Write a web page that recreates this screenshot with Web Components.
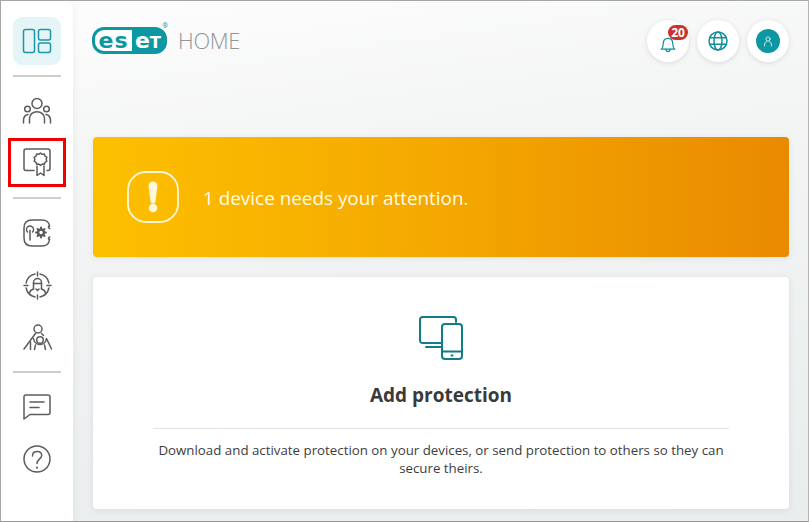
<!DOCTYPE html>
<html>
<head>
<meta charset="utf-8">
<title>ESET HOME</title>
<style>
html, body { margin: 0; height: 100%; }
body { font-family: "Open Sans", "Liberation Sans", sans-serif; color: #3a3a3a; overflow: hidden; }
</style>
</head>
<body>
<home-app>
  <side-nav slot="nav"></side-nav>
  <top-bar slot="top"></top-bar>
  <alert-banner slot="main">1 device needs your attention.</alert-banner>
  <add-card slot="main" heading="Add protection">Download and activate protection on your devices, or send protection to others so they can secure theirs.</add-card>
</home-app>

<script>
class HomeApp extends HTMLElement {
  constructor() {
    super();
    this.attachShadow({ mode: 'open' }).innerHTML = `
      <style>
        :host { display: flex; box-sizing: border-box; width: 809px; height: 522px; border: 1px solid #a6a6a6; border-right-color: #b4b4b4; border-bottom-color: #9a9a9a;
          background: linear-gradient(172deg, #fdfdfd 0%, #f4f5f5 30%, #e9edee 100%); position: relative; overflow: hidden; }
        .content { flex: 1; min-width: 0; display: flex; flex-direction: column; padding: 0 19px 0 20px; }
        .stack { display: flex; flex-direction: column; gap: 20px; }
      </style>
      <slot name="nav"></slot>
      <div class="content">
        <slot name="top"></slot>
        <div class="stack"><slot name="main"></slot></div>
      </div>`;
  }
}

const line = 'fill="none" stroke="currentColor" stroke-width="1.5" stroke-linecap="round" stroke-linejoin="round"';

class SideNav extends HTMLElement {
  constructor() {
    super();
    this.attachShadow({ mode: 'open' }).innerHTML = `
      <style>
        :host { display: flex; flex-direction: column; align-items: center; width: 72px; flex: none; background: #fff; color: #5c5c5c; padding-top: 16px; box-sizing: border-box; border-radius: 0 8px 0 0; position: relative; box-shadow: 2px 0 6px rgba(120,130,130,.08); }
        .tile { width: 48px; height: 48px; border-radius: 9px; background: #e5f4f6; color: #1d97a3; display: flex; align-items: center; justify-content: center; }
        hr { width: 48px; height: 2px; margin: 0; border: 0; background: #cfcfcf; flex: none; }
        .i { width: 48px; display: flex; align-items: center; justify-content: center; flex: none; }
        svg { display: block; }
        .mark { position: absolute; left: 7px; top: 137px; width: 58px; height: 49px; border: 3px solid #f00000; box-sizing: border-box; }
      </style>
      <div class="tile">
        <svg width="30" height="26" viewBox="0 0 30 26" ${line} stroke-width="1.7">
          <rect x="1.5" y="1.5" width="11" height="23" rx="2"/>
          <rect x="16.5" y="1.5" width="12" height="10.5" rx="2"/>
          <rect x="16.5" y="15" width="12" height="9.5" rx="2"/>
        </svg>
      </div>
      <hr style="margin-top:10px">
      <div class="i" style="height:30px;margin-top:19px">
        <svg width="30" height="28" viewBox="0 0 30 28" ${line}>
          <circle cx="15" cy="6.5" r="5"/>
          <circle cx="5.5" cy="12" r="2.8"/>
          <circle cx="24.5" cy="12" r="2.8"/>
          <path d="M7.5 26v-4.5c0-4 3.3-6.8 7.5-6.8s7.5 2.8 7.5 6.8V26"/>
          <path d="M1.5 26v-2.5c0-3 1.5-5.5 4.5-6"/>
          <path d="M28.5 26v-2.5c0-3-1.5-5.5-4.5-6"/>
        </svg>
      </div>
      <div class="i" style="height:30px;margin-top:21px">
        <svg width="28" height="29" viewBox="0 0 28 29" ${line}>
          <path d="M11 22.5H3a2 2 0 0 1-2-2V3a2 2 0 0 1 2-2h22a2 2 0 0 1 2 2v17.5a2 2 0 0 1-2 2h-1"/>
          <path d="M17.5 5l1.7 1.3 2.1-.2.7 2 1.8 1.1-.6 2 .6 2-1.8 1.1-.7 2-2.1-.2-1.7 1.3-1.7-1.3-2.1.2-.7-2-1.8-1.1.6-2-.6-2 1.8-1.1.7-2 2.1.2z"/>
          <path d="M14 18v9.5l3.5-2.5 3.5 2.5V18"/>
        </svg>
      </div>
      <hr style="margin-top:20px">
      <div class="i" style="height:30px;margin-top:19px">
        <svg width="29" height="28" viewBox="0 0 29 28" ${line}>
          <path d="M26.5 7C26 3 23 1 19 1H9C4 1 1 3.5 1 9v10c0 5 3 8 8 8h10c4 0 7-2 7.5-6.5"/>
          <path d="M26.5 7c-1.500.5-1.500 2 .3 2.500M26.500 20.500c-1.500-.5-1.500-2 .3-2.500"/>
          <path d="M7 21v-9.500"/>
          <path d="M4.500 13a3.500 3.500 0 1 1 5 0"/>
          <circle cx="18" cy="13.500" r="3" stroke-width="2.500"/>
          <path d="M18 8.500v1.500M18 17v1.500M13 13.500h1.500M21.500 13.500H23M14.500 10l1 1M20.500 16l1 1M21.500 10l-1 1M15.500 16l-1 1" stroke-width="2"/>
        </svg>
      </div>
      <div class="i" style="height:30px;margin-top:22px">
        <svg width="29" height="29" viewBox="0 0 29 29" ${line}>
          <path d="M12 3.1A11.500 11.500 0 0 0 3.100 12M17 3.100A11.500 11.500 0 0 1 25.900 12M3.100 17A11.500 11.500 0 0 0 12 25.900M17 25.900A11.500 11.500 0 0 0 25.900 17"/>
          <path d="M14.500 1v4M14.500 24v4M1 14.500h4M24 14.500h4"/>
          <path d="M10.500 18v-6.500a4 4 0 0 1 8 0V18"/>
          <path d="M10.500 12.500h8"/>
          <path d="M6.500 22c.5-2.500 2-3.500 4-4M22.500 22c-.5-2.500-2-3.500-4-4"/>
          <path d="M13 18l1.500 1.500L16 18"/>
        </svg>
      </div>
      <div class="i" style="height:30px;margin-top:23px">
        <svg width="29" height="29" viewBox="0 0 29 29" ${line}>
          <circle cx="15" cy="5" r="4"/>
          <circle cx="17" cy="16" r="3.300"/>
          <path d="M12.500 9.500L1 25"/>
          <path d="M18.500 9.500l2 2"/>
          <path d="M7.500 18v7.500M12.500 21l-1 4.500M21.500 21l1 4.500"/>
          <path d="M10.500 14.500c.5 3.500 3 6 6.500 6s6-2.500 6.500-6l5 10.500"/>
        </svg>
      </div>
      <hr style="margin-top:18px">
      <div class="i" style="height:30px;margin-top:19px">
        <svg width="28" height="26" viewBox="0 0 28 26" ${line}>
          <path d="M1 3a2 2 0 0 1 2-2h22a2 2 0 0 1 2 2v15.500a2 2 0 0 1-2 2H7l-6 4.500z"/>
          <path d="M7 8h14M7 13.500h9"/>
        </svg>
      </div>
      <div class="i" style="height:30px;margin-top:22px">
        <svg width="28" height="28" viewBox="0 0 28 28" ${line}>
          <circle cx="14" cy="14" r="13"/>
          <path d="M9.500 11c0-2.800 2-4.500 4.700-4.500s4.500 1.700 4.500 4c0 3.500-4.700 3.500-4.700 8"/>
          <path d="M14 22.500v.2" stroke-width="2"/>
        </svg>
      </div>
      <div class="mark"></div>`;
  }
}

class TopBar extends HTMLElement {
  constructor() {
    super();
    this.attachShadow({ mode: 'open' }).innerHTML = `
      <style>
        :host { display: flex; align-items: flex-start; justify-content: space-between; height: 136px; flex: none; padding-top: 19px; box-sizing: border-box; }
        .brand { display: flex; align-items: center; gap: 11px; height: 42px; margin-top: 1px; }
        .logo { position: relative; display: flex; height: 27px; width: 75px; border: 3px solid #0d97a2; border-radius: 12px; box-sizing: border-box; background: #0d97a2; font: 700 22px/21px "DejaVu Sans", sans-serif; margin: -3px 0 0 -1px; }
        .l, .r { display: block; text-align: center; height: 21px; white-space: nowrap; }
        .l { width: 37px; background: #fff; color: #0d97a2; border-radius: 9px 0 0 9px; letter-spacing: 1px; }
        .r { width: 32px; color: #fff; }
        .r b { font-size: 16.5px; font-weight: 700; }
        .reg { position: absolute; right: -4px; top: -8px; font: 400 7px/8px "Open Sans", sans-serif; color: #0d97a2; }
        .home { font: 300 21.8px/24px "Open Sans", sans-serif; color: #8f9599; letter-spacing: -.3px; margin-top: -2px; }
        .btns { display: flex; gap: 8px; }
        .b { width: 42px; height: 42px; border-radius: 50%; background: #fff; display: flex; align-items: center; justify-content: center; color: #0f8f9a; position: relative; box-shadow: 0 1px 5px rgba(90,100,100,.18); }
        .badge { position: absolute; left: 21px; top: 5px; width: 20px; height: 15px; border-radius: 8px; background: #c9322d; color: #fff; font: 700 12px/15px "Open Sans", sans-serif; text-align: center; }
        .user { width: 24px; height: 24px; border-radius: 50%; background: #0d97a2; color: #d9f1f3; display: flex; align-items: center; justify-content: center; }
        svg { display: block; }
      </style>
      <div class="brand">
        <div class="logo"><span class="l">es</span><span class="r">e<b>T</b></span><span class="reg">®</span></div>
        <div class="home">HOME</div>
      </div>
      <div class="btns">
        <div class="b">
          <svg width="16" height="18" viewBox="0 0 20 22" ${line} stroke-width="1.8" style="margin-top:5px">
            <path d="M1.5 17.5c2-1.5 2.5-3.5 2.5-6.5 0-4 2-7 6-7s6 3 6 7c0 3 .5 5 2.5 6.5z"/>
            <path d="M7.5 17.5c0 2 1 3 2.5 3s2.5-1 2.5-3"/>
          </svg>
          <span class="badge">20</span>
        </div>
        <div class="b">
          <svg width="20" height="20" viewBox="0 0 20 20" ${line}>
            <circle cx="10" cy="10" r="9"/>
            <ellipse cx="10" cy="10" rx="4" ry="9"/>
            <path d="M1.8 6.8h16.400M1.800 13.200h16.400"/>
          </svg>
        </div>
        <div class="b">
          <div class="user">
            <svg width="10" height="11" viewBox="0 0 12 13" fill="none" stroke="currentColor" stroke-width="1.1" stroke-linecap="round">
              <circle cx="6" cy="3.5" r="2.5"/>
              <path d="M2 12V9.5C2 8 3 7 4.5 6.8M10 12V9.5C10 8 9 7 7.5 6.8"/>
            </svg>
          </div>
        </div>
      </div>`;
  }
}

class AlertBanner extends HTMLElement {
  constructor() {
    super();
    this.attachShadow({ mode: 'open' }).innerHTML = `
      <style>
        :host { display: flex; align-items: center; gap: 24px; height: 120px; box-sizing: border-box; padding-left: 34px; border-radius: 4px; background: linear-gradient(90deg, #fdc000 0%, #f4a800 50%, #e98a00 100%); color: #fffbe6; font: 400 18.9px/24px "Open Sans", sans-serif; box-shadow: 0 1px 5px rgba(120,130,130,.15); }
        svg { display: block; flex: none; }
        .msg { padding-top: 1px; }
      </style>
      <svg width="52" height="52" viewBox="0 0 52 52">
        <rect x="1" y="1" width="50" height="50" rx="18" fill="none" stroke="#fff8d8" stroke-width="1.8"/>
        <path d="M21.5 15a4.5 4.5 0 0 1 9 0L28.5 30a2.5 2.5 0 0 1-5 0z" fill="#fff8d8"/>
        <circle cx="26" cy="37" r="4.3" fill="#fff8d8"/>
      </svg>
      <div class="msg"><slot></slot></div>`;
  }
}

class AddCard extends HTMLElement {
  constructor() {
    super();
    const heading = this.getAttribute('heading');
    this.attachShadow({ mode: 'open' }).innerHTML = `
      <style>
        :host { display: flex; flex-direction: column; align-items: center; height: 232px; box-sizing: border-box; padding-top: 39px; border-radius: 4px; background: #fff; box-shadow: 0 1px 6px rgba(120,130,130,.18); }
        svg { display: block; }
        h2 { margin: 22px 0 0; font: 700 19px/26px "Open Sans", sans-serif; color: #3a3a3a; }
        hr { align-self: stretch; margin: 20px 60px 0; height: 1px; border: 0; background: #e2e2e2; }
        p { margin: 12px 60px 0; font: 400 13.3px/18px "Open Sans", sans-serif; color: #3d3d3d; text-align: center; }
      </style>
      <svg width="44" height="44" viewBox="0 0 44 44" fill="none" stroke="#0f7c88" stroke-width="2" stroke-linecap="round" stroke-linejoin="round">
        <path d="M37 6V3.5A2.5 2.5 0 0 0 34.5 1H3.5A2.5 2.5 0 0 0 1 3.5v21A2.5 2.5 0 0 0 3.5 27H22"/>
        <path d="M7 31h15"/>
        <rect x="23" y="8" width="20" height="35" rx="3"/>
        <path d="M23 35.5h20"/>
        <path d="M32.5 39.500h1"/>
      </svg>
      <h2>${heading}</h2>
      <hr>
      <p><slot></slot></p>`;
  }
}

customElements.define('home-app', HomeApp);
customElements.define('side-nav', SideNav);
customElements.define('top-bar', TopBar);
customElements.define('alert-banner', AlertBanner);
customElements.define('add-card', AddCard);
</script>
</body>
</html>
